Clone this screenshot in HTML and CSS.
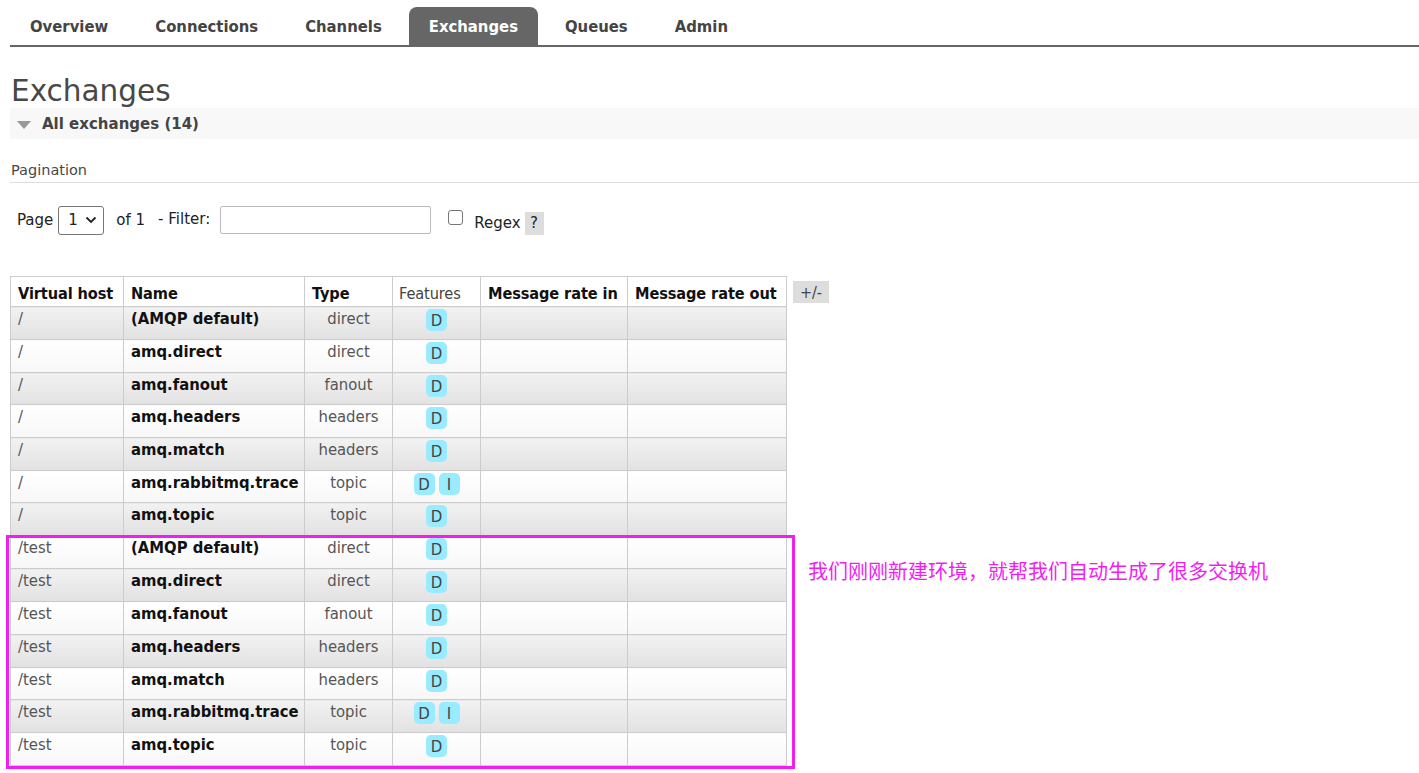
FILE: index.html
```html
<!DOCTYPE html>
<html lang="zh">
<head>
<meta charset="utf-8">
<title>Exchanges</title>
<link rel="stylesheet" href="styles.css">
</head>
<body>
<div class="page">
  <ul class="tabs">
    <li>Overview</li>
    <li>Connections</li>
    <li>Channels</li>
    <li class="active">Exchanges</li>
    <li>Queues</li>
    <li>Admin</li>
  </ul>

  <h1 class="title">Exchanges</h1>
  <div class="section-head"><span class="tri"></span>All exchanges (14)</div>

  <div class="pag-title">Pagination</div>
  <div class="pag-row">
    <span>Page</span>
    <span class="select">1 <svg width="12" height="8" viewBox="0 0 12 8"><path d="M1.5 1.5 L6 6 L10.5 1.5" fill="none" stroke="#222" stroke-width="1.8"/></svg></span>
    <span class="of">of 1</span>
    <span class="filter">- Filter:</span>
    <span class="input"></span>
    <span class="check"></span>
    <span class="regex">Regex</span>
    <span class="help">?</span>
  </div>

  <div class="table-wrap">
    <table class="list">
      <colgroup>
        <col class="c1"><col class="c2"><col class="c3"><col class="c4"><col class="c5"><col class="c6">
      </colgroup>
      <thead>
        <tr><th>Virtual host</th><th>Name</th><th>Type</th><th class="plain">Features</th><th>Message rate in</th><th>Message rate out</th></tr>
      </thead>
      <tbody>
        <tr class="alt1"><td class="vh">/</td><td class="nm">(AMQP default)</td><td class="ty">direct</td><td class="ft"><span class="b">D</span></td><td></td><td></td></tr>
        <tr class="alt0"><td class="vh">/</td><td class="nm">amq.direct</td><td class="ty">direct</td><td class="ft"><span class="b">D</span></td><td></td><td></td></tr>
        <tr class="alt1 short"><td class="vh">/</td><td class="nm">amq.fanout</td><td class="ty">fanout</td><td class="ft"><span class="b">D</span></td><td></td><td></td></tr>
        <tr class="alt0"><td class="vh">/</td><td class="nm">amq.headers</td><td class="ty">headers</td><td class="ft"><span class="b">D</span></td><td></td><td></td></tr>
        <tr class="alt1"><td class="vh">/</td><td class="nm">amq.match</td><td class="ty">headers</td><td class="ft"><span class="b">D</span></td><td></td><td></td></tr>
        <tr class="alt0 short"><td class="vh">/</td><td class="nm">amq.rabbitmq.trace</td><td class="ty">topic</td><td class="ft"><span class="b">D</span><span class="b">I</span></td><td></td><td></td></tr>
        <tr class="alt1"><td class="vh">/</td><td class="nm">amq.topic</td><td class="ty">topic</td><td class="ft"><span class="b">D</span></td><td></td><td></td></tr>
        <tr class="alt0"><td class="vh">/test</td><td class="nm">(AMQP default)</td><td class="ty">direct</td><td class="ft"><span class="b">D</span></td><td></td><td></td></tr>
        <tr class="alt1"><td class="vh">/test</td><td class="nm">amq.direct</td><td class="ty">direct</td><td class="ft"><span class="b">D</span></td><td></td><td></td></tr>
        <tr class="alt0"><td class="vh">/test</td><td class="nm">amq.fanout</td><td class="ty">fanout</td><td class="ft"><span class="b">D</span></td><td></td><td></td></tr>
        <tr class="alt1"><td class="vh">/test</td><td class="nm">amq.headers</td><td class="ty">headers</td><td class="ft"><span class="b">D</span></td><td></td><td></td></tr>
        <tr class="alt0 short"><td class="vh">/test</td><td class="nm">amq.match</td><td class="ty">headers</td><td class="ft"><span class="b">D</span></td><td></td><td></td></tr>
        <tr class="alt1"><td class="vh">/test</td><td class="nm">amq.rabbitmq.trace</td><td class="ty">topic</td><td class="ft"><span class="b">D</span><span class="b">I</span></td><td></td><td></td></tr>
        <tr class="alt0"><td class="vh">/test</td><td class="nm">amq.topic</td><td class="ty">topic</td><td class="ft"><span class="b">D</span></td><td></td><td></td></tr>
      </tbody>
    </table>
    <span class="plusminus">+/-</span>
    <div class="annot-box"></div>
    <div class="annot-text">我们刚刚新建环境，就帮我们自动生成了很多交换机</div>
  </div>
</div>
</body>
</html>
```

FILE: styles.css
```css
* { box-sizing: border-box; }
html, body { margin: 0; padding: 0; background: #fff; }
body {
  font-family: "DejaVu Sans Condensed", "DejaVu Sans", sans-serif;
  color: #444;
  font-size: 16.5px;
  min-height: 773px;
}
.page { padding: 7px 0 7px 10px; }

.tabs {
  list-style: none;
  margin: 0;
  padding: 0;
  display: flex;
  border-bottom: 2px solid #666;
  height: 40px;
}
.tabs li {
  font-weight: bold;
  font-size: 16.5px;
  color: #444;
  padding: 10px 20px 0 20px;
  height: 38px;
  margin-right: 7px;
}
.tabs li.active {
  background: #666;
  color: #fff;
  border-radius: 8px 8px 0 0;
}

.title {
  font-family: "DejaVu Sans", sans-serif;
  font-weight: normal;
  font-size: 29.5px;
  color: #484848;
  margin: 27px 0 0 1px;
  line-height: 34px;
}
.section-head {
  background: #f8f8f8;
  height: 31px;
  font-family: "DejaVu Sans", sans-serif;
  font-weight: bold;
  font-size: 15px;
  color: #444;
  display: flex;
  align-items: center;
  padding: 1px 0 0 7px;
}
.tri {
  width: 0; height: 0;
  border-left: 7px solid transparent;
  border-right: 7px solid transparent;
  border-top: 8px solid #999;
  margin-right: 11px;
  margin-top: 2px;
}
.pag-title {
  margin-top: 23px;
  font-family: "DejaVu Sans", sans-serif;
  font-size: 14.5px;
  color: #484848;
  padding: 0 0 4px 1px;
  border-bottom: 1px solid #ddd;
}
.pag-row {
  display: flex;
  align-items: center;
  margin-top: 23px;
  padding-left: 7px;
  font-family: "DejaVu Sans", sans-serif;
  font-size: 15px;
  color: #222;
  height: 28px;
}
.select {
  margin-left: 5px;
  width: 46px; height: 29px;
  border: 1px solid #767676;
  border-radius: 3px;
  display: flex; align-items: center; justify-content: space-between;
  padding: 0 6px 0 9px;
  font-size: 15px;
}
.of { margin-left: 12px; }
.filter { margin-left: 13px; margin-top: -2px; }
.input {
  margin-left: 10px;
  width: 211px; height: 28px;
  border: 1px solid #bbb;
  border-radius: 2px;
}
.check {
  margin-left: 17px;
  width: 15px; height: 15px;
  border: 1px solid #767676;
  border-radius: 3px;
  margin-top: -6px;
}
.regex { margin-left: 11px; margin-top: 6px; }
.help {
  margin-left: 4px;
  background: #ddd;
  width: 19px; height: 23px;
  display: flex; align-items: center; justify-content: center;
  margin-top: 6px;
}

.table-wrap {
  position: relative;
  margin-top: 42px;
  display: flex;
  align-items: flex-start;
}
.list {
  border-collapse: collapse;
  border: 1px solid #ccc;
  font-size: 16.5px;
  table-layout: fixed;
  width: 776px;
  flex: none;
}
.c1 { width: 113px; }
.c2 { width: 181px; }
.c3 { width: 88px; }
.c4 { width: 88px; }
.c5 { width: 147px; }
.c6 { width: 159px; }
.list th, .list td {
  border: 1px solid #ccc;
  padding: 0 7px;
  overflow: visible;
}
.list th {
  height: 30px;
  text-align: left;
  color: #111;
  background: #fff;
  font-weight: bold;
  font-size: 16.2px;
  padding-top: 3px;
  white-space: nowrap;
  letter-spacing: -0.1px;
}
.list th.plain { font-weight: normal; color: #444; padding-left: 6px; }
.list td {
  height: 33px;
  vertical-align: top;
  padding-top: 2px;
  line-height: 20px;
  white-space: nowrap;
}
.list tr.short td { height: 32px; }
.alt1 td { background: linear-gradient(#f2f2f2, #e2e2e2); }
.alt0 td { background: linear-gradient(#ffffff, #f7f7f7); }
.vh { color: #555; }
.nm { font-weight: bold; color: #111; }
.ty { text-align: center; color: #555; }
.ft { text-align: center; padding-top: 2px !important; }
.b {
  display: inline-block;
  background: #99ebff;
  border-radius: 5px;
  width: 21px; height: 22px;
  line-height: 24px;
  text-align: center;
  color: #444;
  font-family: "DejaVu Sans", sans-serif;
  font-size: 15px;
  margin: 0 2px;
}
.plusminus {
  margin-left: 6px;
  margin-top: 5px;
  background: #ddd;
  color: #444;
  width: 36px; height: 22px;
  display: flex; align-items: center; justify-content: center;
  font-size: 16px;
}
.annot-box {
  position: absolute;
  left: -4px;
  top: 259px;
  height: 234px;
  width: 789px;
  border: 3px solid #f11ef1;
  pointer-events: none;
}
.annot-text {
  position: absolute;
  left: 798px;
  top: 280px;
  color: #f11ef1;
  font-family: "Noto Sans CJK SC", sans-serif;
  font-size: 20px;
  white-space: nowrap;
}
```
